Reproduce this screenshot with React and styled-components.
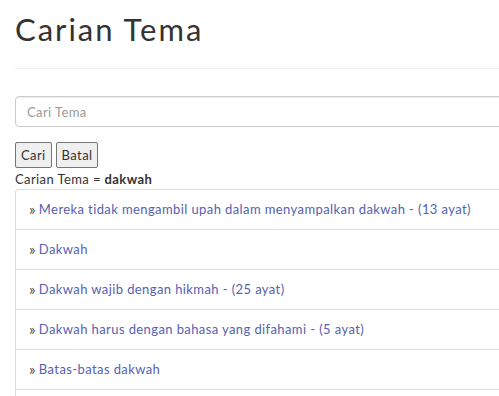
import React from "react";
import styled, { createGlobalStyle } from "styled-components";

const GlobalStyle = createGlobalStyle`
  html, body {
    margin: 0;
    padding: 0;
    background: #fff;
    overflow: hidden;
  }
  body {
    font-family: "Lato", "Open Sans", sans-serif;
    font-size: 13px;
    line-height: 1.42857;
    letter-spacing: 0.4px;
    color: #333;
  }
`;

const topics = [
  "Mereka tidak mengambil upah dalam menyampalkan dakwah - (13 ayat)",
  "Dakwah",
  "Dakwah wajib dengan hikmah - (25 ayat)",
  "Dakwah harus dengan bahasa yang difahami - (5 ayat)",
  "Batas-batas dakwah",
  "Dakwah kepada ahli kitab - (4 ayat)",
];

const App = () => {
  return (
    <Page>
      <GlobalStyle />
      <Title>Carian Tema</Title>
      <Rule />
      <SearchInput placeholder="Cari Tema" />
      <ButtonRow>
        <Button>Cari</Button>
        <Button>Batal</Button>
      </ButtonRow>
      <Result>
        Carian Tema = <b>dakwah</b>
      </Result>
      <List>
        {topics.map((t) => (
          <Item key={t}>
            <Arrow>»</Arrow>
            <Link href="#">{t}</Link>
          </Item>
        ))}
      </List>
    </Page>
  );
};

export default App;

const Page = styled.div`
  width: 600px;
  padding: 0 15px;
`;

const Title = styled.h1`
  margin: 0;
  padding-top: 9px;
  font-size: 31px;
  font-weight: 400;
  line-height: 40px;
  letter-spacing: 2px;
  color: #333;
`;

const Rule = styled.hr`
  margin: 19px 0 27px;
  border: 0;
  border-top: 1px solid #eee;
`;

const SearchInput = styled.input`
  display: block;
  box-sizing: border-box;
  width: 100%;
  height: 31px;
  padding: 5px 11px;
  font-family: inherit;
  font-size: 13px;
  letter-spacing: inherit;
  color: #555;
  border: 1px solid #ccc;
  border-radius: 4px;
  box-shadow: inset 0 1px 1px rgba(0, 0, 0, 0.075);
  &::placeholder {
    color: #999;
  }
`;

const ButtonRow = styled.div`
  display: flex;
  gap: 4px;
  margin-top: 15px;
`;

const Button = styled.button`
  height: 26px;
  padding: 1px 5px;
  font-family: inherit;
  font-size: 13px;
  letter-spacing: inherit;
  color: #333;
  background: #efefef;
  border: 1px solid #767676;
  border-radius: 2px;
`;

const Result = styled.div`
  line-height: 20px;
  margin-top: 1px;
  b {
    font-weight: 700;
  }
`;

const List = styled.div`
  border: 1px solid #ddd;
  border-radius: 4px 0 0 0;
  border-right: 0;
`;

const Item = styled.div`
  display: flex;
  align-items: center;
  height: 39px;
  padding-left: 13px;
  border-top: 1px solid #ddd;
  &:first-child {
    border-top: 0;
  }
`;

const Arrow = styled.span`
  font-size: 15px;
  color: #444;
  margin-right: 3px;
`;

const Link = styled.a`
  color: #5561b1;
  text-decoration: none;
`;
